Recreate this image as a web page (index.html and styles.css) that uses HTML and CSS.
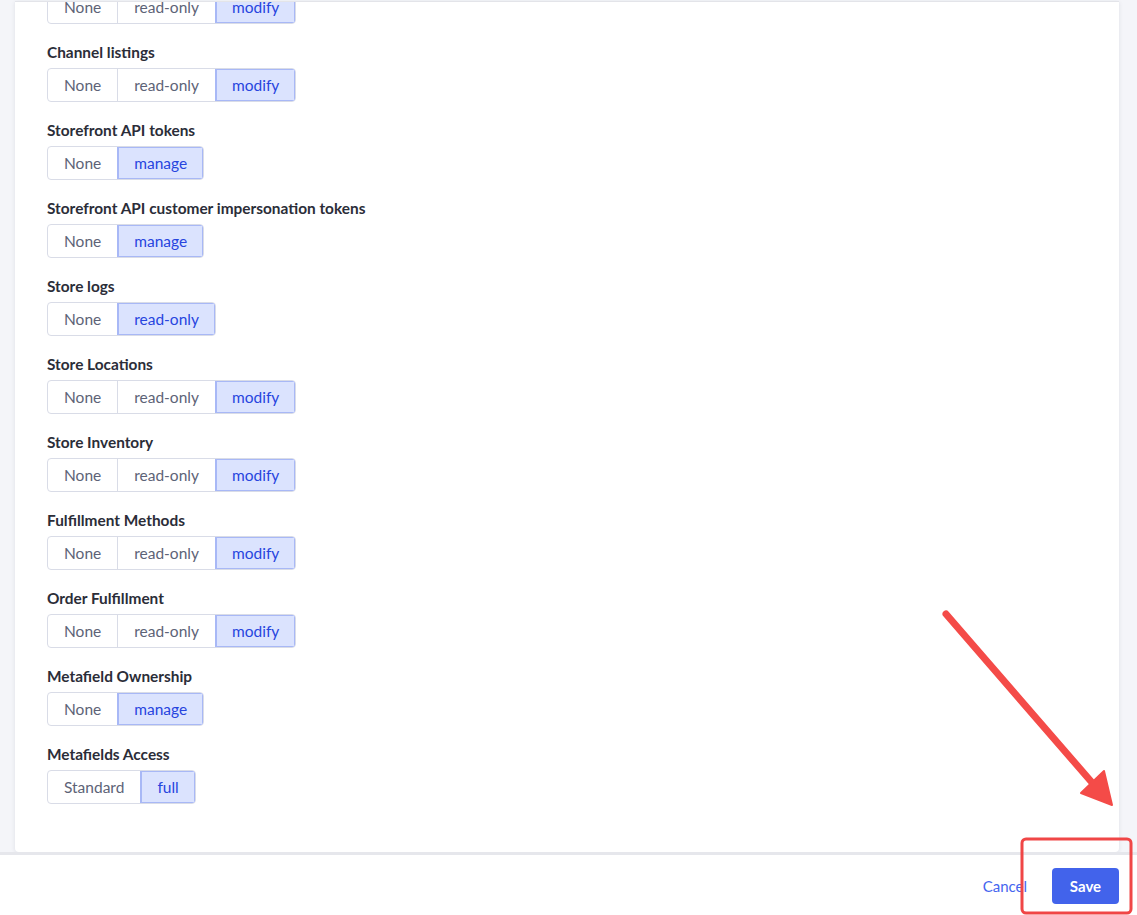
FILE: index.html
```html
<!DOCTYPE html>
<html>
<head>
<meta charset="utf-8">
<link rel="stylesheet" href="styles.css">
</head>
<body>
<div class="main">
  <div class="card">
    <div class="inner">
      <div class="row"><div class="label">Products</div><div class="seg"><span>None</span><span>read-only</span><span class="on">modify</span></div></div>
      <div class="row"><div class="label">Channel listings</div><div class="seg"><span>None</span><span>read-only</span><span class="on">modify</span></div></div>
      <div class="row"><div class="label">Storefront API tokens</div><div class="seg"><span>None</span><span class="on">manage</span></div></div>
      <div class="row"><div class="label">Storefront API customer impersonation tokens</div><div class="seg"><span>None</span><span class="on">manage</span></div></div>
      <div class="row"><div class="label">Store logs</div><div class="seg"><span>None</span><span class="on">read-only</span></div></div>
      <div class="row"><div class="label">Store Locations</div><div class="seg"><span>None</span><span>read-only</span><span class="on">modify</span></div></div>
      <div class="row"><div class="label">Store Inventory</div><div class="seg"><span>None</span><span>read-only</span><span class="on">modify</span></div></div>
      <div class="row"><div class="label">Fulfillment Methods</div><div class="seg"><span>None</span><span>read-only</span><span class="on">modify</span></div></div>
      <div class="row"><div class="label">Order Fulfillment</div><div class="seg"><span>None</span><span>read-only</span><span class="on">modify</span></div></div>
      <div class="row"><div class="label">Metafield Ownership</div><div class="seg"><span>None</span><span class="on">manage</span></div></div>
      <div class="row"><div class="label">Metafields Access</div><div class="seg"><span>Standard</span><span class="on">full</span></div></div>
    </div>
  </div>
</div>
<div class="footer">
  <a class="cancel">Cancel</a>
  <button class="save">Save</button>
</div>
<svg class="annot" width="1137" height="915" viewBox="0 0 1137 915">
  <line x1="946" y1="614" x2="1095" y2="786" stroke="#f44b48" stroke-width="7" stroke-linecap="round"/>
  <polygon points="1081,793 1104,771 1112,805" fill="#f44b48" stroke="#f44b48" stroke-width="2" stroke-linejoin="round"/>
  <rect x="1022" y="839" width="109" height="74" rx="4" fill="none" stroke="#f04646" stroke-width="3"/>
</svg>
</body>
</html>
```
FILE: styles.css
```css
html, body {
  margin: 0;
  padding: 0;
}
body {
  width: 1137px;
  height: 915px;
  overflow: hidden;
  background: #f4f5f9;
  font-family: "Lato", "Noto Sans", sans-serif;
  font-size: 15px;
  position: relative;
}
.main {
  height: 852px;
  padding: 0 18px 0 15px;
  box-sizing: border-box;
  padding-top: 1px;
}
.card {
  height: 851px;
  background: #fff;
  border-top: 1px solid #e3e4e9;
  border-radius: 0 0 4px 4px;
  box-shadow: 0 1px 4px rgba(30, 35, 60, 0.10);
  overflow: hidden;
  box-sizing: border-box;
}
.inner {
  margin-top: -38px;
  padding-left: 32px;
}
.row {
  margin-bottom: 18px;
}
.label {
  font-weight: 700;
  font-size: 15.4px;
  color: #2b2d38;
  line-height: 20px;
  margin-bottom: 6px;
}
.seg {
  display: inline-flex;
  height: 34px;
  border: 1px solid #d9dce7;
  border-radius: 4px;
  box-sizing: border-box;
  overflow: hidden;
  font-size: 15.5px;
}
.seg span {
  display: flex;
  align-items: center;
  padding: 2px 16px 0;
  color: #5d6377;
  border-left: 1px solid #d9dce7;
  line-height: 1;
}
.seg span:first-child {
  border-left: none;
}
.seg span.on {
  background: #dbe3fe;
  color: #2745de;
  box-shadow: inset 0 0 0 1px #a8b8f6;
  border-left-color: #a8b8f6;
}
.footer {
  height: 63px;
  border-top: 3px solid #e6e7ec;
  background: #fff;
  box-sizing: border-box;
  display: flex;
  justify-content: flex-end;
  align-items: center;
  padding: 1px 18px 0 0;
  gap: 25px;
}
.cancel {
  color: #4566ef;
  font-size: 15px;
}
.save {
  width: 67px;
  height: 36px;
  border: none;
  border-radius: 4px;
  background: #4263eb;
  color: #fff;
  font-family: "Lato", "Noto Sans", sans-serif;
  font-weight: 700;
  font-size: 15px;
}
.annot {
  position: absolute;
  left: 0;
  top: 0;
  pointer-events: none;
}
```
